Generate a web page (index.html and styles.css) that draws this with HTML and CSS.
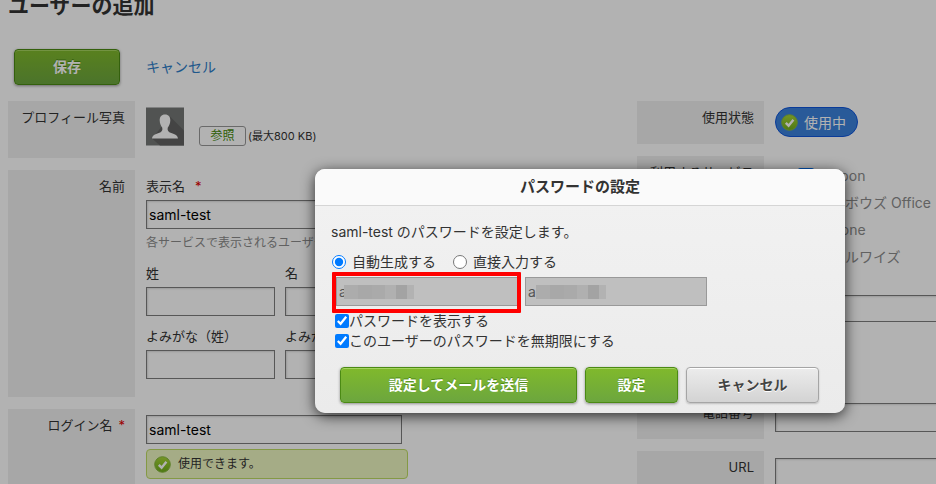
FILE: index.html
```html
<!DOCTYPE html>
<html lang="ja">
<head>
    <meta charset="UTF-8">
    <meta name="viewport" content="width=device-width, initial-scale=1.0">
    <title>ユーザーの追加</title>
    <link rel="stylesheet" href="styles.css">
</head>
<body>
    <svg width="0" height="0" class="defs">
        <defs>
            <linearGradient id="okFill" x1="0" y1="0" x2="0" y2="1">
                <stop offset="0" stop-color="#a9d636"/>
                <stop offset="1" stop-color="#6fae1c"/>
            </linearGradient>
            <symbol id="ok" viewBox="0 0 17 17">
                <circle cx="8.5" cy="8.5" r="7.8" fill="url(#okFill)" stroke="#86b83e"/>
                <path d="M4.8 8.8l2.8 2.9 4.8-6" fill="none" stroke="#fff" stroke-width="2.4"/>
            </symbol>
        </defs>
    </svg>

    <form class="page">
        <h1>ユーザーの追加</h1>
        <div class="actions">
            <button type="button" class="btn green save">保存</button>
            <a href="#">キャンセル</a>
        </div>

        <div class="columns">
            <div class="column">
                <div class="row photo">
                    <div class="head">プロフィール写真</div>
                    <div class="cell photo-cell">
                        <svg class="avatar" viewBox="0 0 38 38">
                            <rect width="38" height="38" fill="#757876"/>
                            <path d="M24 9l14 14v15H14L6 31z" fill="#626262"/>
                            <path d="M19 7c-3.600 0-5.500 2.600-5.300 6 .1 3 1.200 5.500 2.600 7.200.5 3-.6 4.200-3.500 5.200-4 1.300-6.400 2.200-6.800 5.600h26c-.4-3.400-2.800-4.300-6.800-5.600-2.900-1-4-2.200-3.500-5.200 1.400-1.700 2.500-4.200 2.600-7.200.2-3.400-1.700-6-5.300-6z" fill="#fff"/>
                        </svg>
                        <button type="button" class="browse">参照</button>
                        <span class="limit">(最大800 KB)</span>
                    </div>
                </div>

                <div class="row name">
                    <div class="head">名前</div>
                    <div class="cell">
                        <label for="displayName">表示名<span class="required">*</span></label>
                        <input type="text" id="displayName" class="wide" value="saml-test">
                        <p class="hint">各サービスで表示されるユーザーの名前です。</p>
                        <div class="pair">
                            <div>
                                <label for="lastName">姓</label>
                                <input type="text" id="lastName">
                            </div>
                            <div>
                                <label for="firstName">名</label>
                                <input type="text" id="firstName">
                            </div>
                            <div>
                                <label for="lastKana">よみがな（姓）</label>
                                <input type="text" id="lastKana">
                            </div>
                            <div>
                                <label for="firstKana">よみがな（名）</label>
                                <input type="text" id="firstKana">
                            </div>
                        </div>
                    </div>
                </div>

                <div class="row">
                    <label class="head" for="loginName">ログイン名<span class="required">*</span></label>
                    <div class="cell">
                        <input type="text" id="loginName" class="wide" value="saml-test">
                        <div class="available">
                            <svg class="ok"><use href="#ok"/></svg>
                            <span>使用できます。</span>
                        </div>
                    </div>
                </div>
            </div>

            <div class="column">
                <div class="row status">
                    <div class="head">使用状態</div>
                    <div class="cell">
                        <button type="button" class="pill"><svg class="ok"><use href="#ok"/></svg>使用中</button>
                    </div>
                </div>
                <div class="row services">
                    <div class="head">利用するサービス</div>
                    <div class="cell service-list">
                        <label><input type="checkbox" checked>Garoon</label>
                        <label><input type="checkbox">サイボウズ Office</label>
                        <label><input type="checkbox">kintone</label>
                        <label><input type="checkbox">メールワイズ</label>
                    </div>
                </div>
                <div class="row org">
                    <label class="head" for="org">所属組織</label>
                    <div class="cell"><input type="text" id="org"></div>
                </div>
                <div class="row phone">
                    <label class="head" for="phone">電話番号</label>
                    <div class="cell"><input type="text" id="phone"></div>
                </div>
                <div class="row phone">
                    <label class="head" for="url">URL</label>
                    <div class="cell"><input type="text" id="url"></div>
                </div>
            </div>
        </div>
    </form>

    <div class="overlay"></div>

    <form class="dialog" role="dialog" aria-labelledby="dialogTitle">
        <h2 id="dialogTitle">パスワードの設定</h2>
        <div class="dialog-body">
            <p>saml-test のパスワードを設定します。</p>
            <div class="modes">
                <label><input type="radio" name="mode" checked>自動生成する</label>
                <label><input type="radio" name="mode">直接入力する</label>
            </div>
            <div class="passwords">
                <div class="password marked">
                    <input type="text" value="a" aria-label="パスワード" disabled>
                    <span class="mosaic"></span>
                </div>
                <div class="password">
                    <input type="text" value="a" aria-label="パスワード（確認）" disabled>
                    <span class="mosaic"></span>
                </div>
            </div>
            <div class="options">
                <label><input type="checkbox" checked>パスワードを表示する</label>
                <label><input type="checkbox" checked>このユーザーのパスワードを無期限にする</label>
            </div>
            <div class="dialog-buttons">
                <button type="button" class="btn green send">設定してメールを送信</button>
                <button type="button" class="btn green set">設定</button>
                <button type="button" class="btn gray">キャンセル</button>
            </div>
        </div>
    </form>
</body>
</html>
```

FILE: styles.css
```css
* {
    box-sizing: border-box;
}
body {
    margin: 0;
    height: 100vh;
    overflow: hidden;
    position: relative;
    background: #fff;
    color: #333;
    font-family: Inter, "Noto Sans CJK JP", sans-serif;
    font-size: 13px;
    line-height: 20px;
}
input, button {
    font-family: inherit;
    margin: 0;
}
h1, h2, p {
    margin: 0;
}
.defs {
    position: absolute;
}
.page {
    padding-left: 8px;
}
h1 {
    font-size: 21px;
    line-height: 32px;
    margin-top: -10px;
    color: #333;
}
.actions {
    display: flex;
    align-items: center;
    gap: 26px;
    padding: 27px 0 16px 6px;
    font-size: 14px;
}
.actions a {
    color: #2d7dc8;
    text-decoration: none;
}

/* Buttons */
.btn {
    height: 36px;
    padding: 0 0 2px;
    border-radius: 4px;
    font-size: 14px;
    font-weight: bold;
}
.green {
    color: #fff;
    border: 1px solid #4b8a14;
    background: linear-gradient(#80b92c, #6ca63e);
    box-shadow: inset 0 1px 0 #a5d35f, 0 1px 3px rgba(0, 0, 0, 0.4);
    text-shadow: 0 -1px 0 #4b8a14;
}
.gray {
    color: #444;
    border: 1px solid #a5a5a5;
    background: linear-gradient(#ececec, #d3d3d3);
    box-shadow: inset 0 1px 0 #fff, 0 1px 2px rgba(0, 0, 0, 0.2);
    text-shadow: 0 1px 0 #fff;
}
.save {
    width: 106px;
}

/* Form rows */
.columns {
    display: grid;
    grid-template-columns: 629px 1fr;
}
.column {
    display: flex;
    flex-direction: column;
    gap: 12px;
}
.row {
    display: grid;
    grid-template-columns: 127px 1fr;
    gap: 11px;
    min-height: 90px;
}
.head {
    background: #f0f0f0;
    padding: 6px 10px;
    text-align: right;
    white-space: nowrap;
}
.cell {
    padding-top: 6px;
    min-width: 0;
}
.cell label {
    display: block;
}
.required {
    color: #e00000;
    margin-left: 10px;
}
.head .required {
    margin-left: 6px;
}
.page input[type="text"] {
    display: block;
    width: 129px;
    height: 29px;
    padding: 0 2px;
    border: 1px solid #7d7d7d;
    background: #fff;
    box-shadow: inset 1px 1px 2px #ddd;
    font-size: 14px;
    color: #000;
}
.page input.wide {
    width: 256px;
}
.photo {
    min-height: 57px;
}
.photo-cell {
    display: flex;
    align-items: flex-end;
    padding-bottom: 12px;
}
.avatar {
    width: 38px;
    height: 39px;
    margin-right: 15px;
}
.browse {
    width: 47px;
    height: 20px;
    padding: 0;
    border: 1px solid #999;
    border-radius: 3px;
    background: #fff;
    color: #468a0a;
    font-size: 12px;
    line-height: 16px;
}
.limit {
    margin-left: 2px;
    font-size: 11px;
}
.name {
    min-height: 227px;
}
.name label {
    padding-bottom: 4px;
}
.hint {
    padding: 4px 0 10px;
    font-size: 12px;
    color: #8c8c8c;
}
.pair {
    display: grid;
    grid-template-columns: 129px 129px;
    gap: 10px;
}
.available {
    display: flex;
    align-items: center;
    gap: 7px;
    width: 262px;
    height: 30px;
    margin-top: 5px;
    padding-left: 7px;
    border: 1px solid #bedc64;
    border-radius: 4px;
    background: #edf6c0;
    font-size: 12px;
    color: #333;
}
.ok {
    width: 17px;
    height: 17px;
}

/* Right column */
.status, .phone {
    min-height: 43px;
}
.pill {
    display: flex;
    align-items: center;
    gap: 6px;
    height: 30px;
    padding: 0 11px 0 5px;
    border: 1px solid #0f55dc;
    border-radius: 15px;
    background: #3c82dc;
    color: #fff;
    font-size: 14px;
}
.services {
    min-height: 120px;
}
.service-list label {
    display: flex;
    align-items: center;
    gap: 3px;
    height: 27px;
    padding-left: 23px;
    font-size: 14px;
    white-space: nowrap;
    color: #8c8c8c;
}
.service-list input {
    width: 16px;
    height: 16px;
}
.org {
    min-height: 96px;
}
.org .cell, .phone .cell {
    padding-top: 7px;
}
.column .org input[type="text"], .column .phone input[type="text"] {
    width: 256px;
}
.column .org input[type="text"] {
    height: 27px;
}

/* Password dialog */
.overlay {
    position: absolute;
    inset: 0;
    background: rgba(0, 0, 0, 0.3);
}
.dialog {
    position: absolute;
    left: 315px;
    top: 169px;
    width: 530px;
    border-radius: 10px;
    background: linear-gradient(#f2f2f2, #ebebeb);
    box-shadow: 0 3px 14px rgba(0, 0, 0, 0.75);
    font-size: 14px;
}
.dialog h2 {
    padding: 8px 0;
    border-bottom: 1px solid #d5d5d5;
    border-radius: 10px 10px 0 0;
    background: #fafafa;
    font-size: 15px;
    line-height: 20px;
    text-align: center;
}
.dialog-body {
    padding: 16px 16px 10px;
}
.dialog input[type="radio"], .dialog input[type="checkbox"] {
    width: 14px;
    height: 14px;
    accent-color: #007aff;
}
.dialog label {
    display: flex;
    align-items: center;
}
.modes {
    display: flex;
    gap: 17px;
    padding: 10px 0 5px 1px;
}
.modes label {
    gap: 6px;
}
.passwords {
    display: flex;
    gap: 7px;
    padding-left: 5px;
}
.password {
    position: relative;
}
.password input {
    display: block;
    width: 182px;
    height: 29px;
    padding: 0 2px;
    border: 1px solid #999;
    background: #bfbfbf;
    color: #555;
    font-size: 14px;
}
.marked::after {
    content: "";
    position: absolute;
    inset: -5px -3px -7px -4px;
    border: 4px solid #f00;
    border-radius: 1px;
}
.mosaic {
    position: absolute;
    left: 11px;
    top: 8px;
    width: 70px;
    height: 14px;
    background: linear-gradient(90deg, #acacac 20%, #a8a8a8 20% 40%, #aaa 40% 58%, #b0b0b0 58% 74%, #a3a3a3 74% 90%, #b2b2b2 90%);
}
.marked .mosaic {
    left: 8px;
}
.options {
    padding: 5px 0 16px 4px;
}
.dialog-buttons {
    display: flex;
    gap: 8px;
    padding-left: 9px;
}
.send {
    width: 237px;
}
.set {
    width: 93px;
}
.dialog-buttons .gray {
    width: 133px;
}
```
